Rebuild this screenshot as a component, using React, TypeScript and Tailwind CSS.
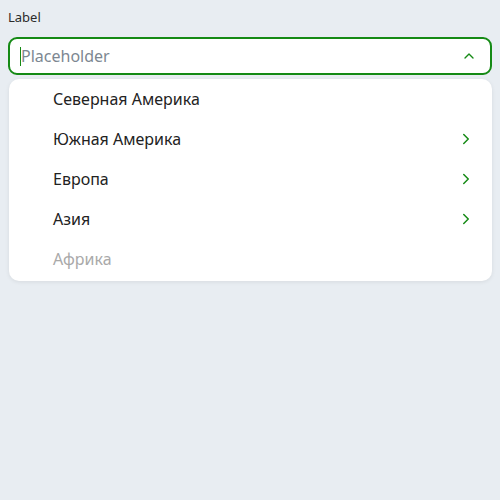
import { ChevronRight, ChevronUp } from "lucide-react";

const items = [
  { name: "Северная Америка", sub: false, disabled: false },
  { name: "Южная Америка", sub: true, disabled: false },
  { name: "Европа", sub: true, disabled: false },
  { name: "Азия", sub: true, disabled: false },
  { name: "Африка", sub: false, disabled: true },
];

export default function App() {
  return (
    <div className="min-h-[500px] bg-[#e8edf2] px-2 pt-[7px] font-['Noto_Sans',sans-serif]">
      <div className="text-[13px] leading-5 text-[#2b2b2b]">Label</div>
      <div className="mt-[10px] flex h-[38px] items-center rounded-[9px] border-2 border-[#158a15] bg-white pl-[10px] pr-[13px]">
        <span className="h-[19px] w-px bg-[#158a15]" />
        <span className="flex-1 text-[16px] text-[#7d8791]">Placeholder</span>
        <ChevronUp size={16} strokeWidth={2} className="text-[#158a15]" />
      </div>
      <div className="mt-[4px] ml-px rounded-[10px] bg-white pb-[2px] shadow-[0_1px_4px_rgba(0,0,0,0.08)]">
        {items.map((it) => (
          <div key={it.name} className="flex h-10 items-center pl-11 pr-[17px]">
            <span className={`flex-1 text-[16px] ${it.disabled ? "text-[#a9a9a9]" : "text-[#222]"}`}>
              {it.name}
            </span>
            {it.sub && <ChevronRight size={18} strokeWidth={2} className="text-[#158a15]" />}
          </div>
        ))}
      </div>
    </div>
  );
}
